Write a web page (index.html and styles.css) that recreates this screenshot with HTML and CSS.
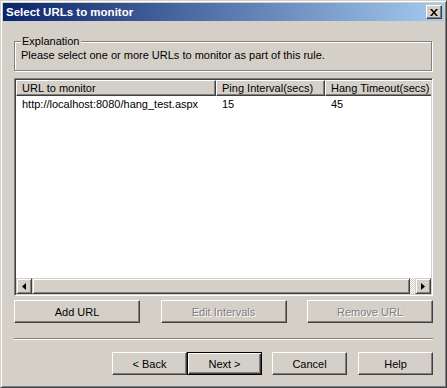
FILE: index.html
```html
<!DOCTYPE html>
<html lang="en">
<head>
    <meta charset="UTF-8">
    <title>Select URLs to monitor</title>
    <link rel="stylesheet" href="styles.css">
</head>
<body>
    <div class="window">
        <div class="titlebar">
            <span class="title">Select URLs to monitor</span>
            <span class="close">
                <svg width="8" height="7" viewBox="0 0 8 7"><path d="M0 0h2l2 2.4 2-2.4h2l-3 3.5 3 3.5h-2l-2-2.4-2 2.4h-2l3-3.5z" fill="#000"/></svg>
            </span>
        </div>

        <div class="content">
            <div class="group">
                <span class="legend">Explanation</span>
                <p>Please select one or more URLs to monitor as part of this rule.</p>
            </div>

            <div class="listview">
                <div class="list-header">
                    <div class="col col-url">URL to monitor</div>
                    <div class="col col-ping">Ping Interval(secs)</div>
                    <div class="col col-hang">Hang Timeout(secs)</div>
                </div>
                <div class="list-rows">
                    <div class="row">
                        <div class="cell col-url">http://localhost:8080/hang_test.aspx</div>
                        <div class="cell col-ping">15</div>
                        <div class="cell col-hang">45</div>
                    </div>
                </div>
                <div class="hscroll">
                    <div class="sb-btn">
                        <svg width="4" height="7" viewBox="0 0 4 7"><path d="M4 0v7L0 3.5z" fill="#000"/></svg>
                    </div>
                    <div class="sb-thumb"></div>
                    <div class="sb-track"></div>
                    <div class="sb-btn">
                        <svg width="4" height="7" viewBox="0 0 4 7"><path d="M0 0v7l4-3.5z" fill="#000"/></svg>
                    </div>
                </div>
            </div>

            <div class="actions">
                <button class="btn wide">Add URL</button>
                <button class="btn wide" disabled>Edit Intervals</button>
                <button class="btn wide" disabled>Remove URL</button>
            </div>

            <div class="separator"></div>

            <div class="nav">
                <button class="btn">&lt; Back</button>
                <button class="btn default">Next &gt;</button>
                <button class="btn cancel">Cancel</button>
                <button class="btn help">Help</button>
            </div>
        </div>
    </div>
</body>
</html>
```

FILE: styles.css
```css
body {
    margin: 0;
    font-family: 'Liberation Sans', Arial, sans-serif;
    font-size: 11px;
    color: #000;
    background: #d4d0c8;
}
.window {
    width: 447px;
    height: 388px;
    box-sizing: border-box;
    background: #d4d0c8;
    border: 1px solid;
    border-color: #d4d0c8 #404040 #404040 #d4d0c8;
    box-shadow: inset 1px 1px #fff, inset -1px -1px #808080;
    padding: 2px;
}
.titlebar {
    height: 18px;
    display: flex;
    align-items: center;
    justify-content: space-between;
    background: linear-gradient(to right, #0a246a, #a6caf0);
    padding: 0 2px 0 3px;
}
.title {
    color: #fff;
    font-weight: bold;
    font-size: 11.5px;
}
.close {
    width: 16px;
    height: 14px;
    box-sizing: border-box;
    display: flex;
    align-items: center;
    justify-content: center;
    background: #d4d0c8;
    border: 1px solid;
    border-color: #fff #404040 #404040 #fff;
    box-shadow: inset -1px -1px #808080;
}
.content {
    padding: 20px 11px 0 11px;
}

/* group box */
.group {
    position: relative;
    height: 30px;
    box-sizing: border-box;
    margin-right: 1px;
    border: 1px solid #808080;
    box-shadow: inset 1px 1px #fff, 1px 1px #fff;
    margin-bottom: 7px;
}
.legend {
    position: absolute;
    top: -7px;
    left: 6px;
    padding: 0 1px;
    line-height: 13px;
    background: #d4d0c8;
}
.group p {
    margin: 0;
    padding: 7px 0 0 6px;
    line-height: 13px;
}

/* list view */
.listview {
    height: 218px;
    box-sizing: border-box;
    background: #fff;
    border: 1px solid;
    border-color: #808080 #fff #fff #808080;
    box-shadow: inset 1px 1px #404040, inset -1px -1px #d4d0c8;
    padding: 1px;
    display: flex;
    flex-direction: column;
    overflow: hidden;
}
.list-header {
    display: flex;
    height: 16px;
    flex-shrink: 0;
    overflow: hidden;
}
.col {
    box-sizing: border-box;
    flex-shrink: 0;
    height: 16px;
    line-height: 14px;
    background: #d4d0c8;
    border: 1px solid;
    border-color: #fff #404040 #404040 #fff;
    box-shadow: inset -1px -1px #808080;
    padding-left: 5px;
    white-space: nowrap;
}
.col-url {
    width: 200px;
}
.col-ping {
    width: 109px;
}
.col-hang {
    width: 109px;
}
.list-rows {
    flex: 1;
}
.row {
    display: flex;
    height: 16px;
    line-height: 16px;
}
.cell {
    box-sizing: border-box;
    flex-shrink: 0;
    padding-left: 6px;
    white-space: nowrap;
}
.hscroll {
    display: flex;
    height: 16px;
    flex-shrink: 0;
}
.sb-btn,
.sb-thumb {
    box-sizing: border-box;
    height: 16px;
    background: #d4d0c8;
    border: 1px solid;
    border-color: #d4d0c8 #404040 #404040 #d4d0c8;
    box-shadow: inset 1px 1px #fff, inset -1px -1px #808080;
}
.sb-btn {
    width: 16px;
    display: flex;
    align-items: center;
    justify-content: center;
}
.sb-thumb {
    width: 378px;
}
.sb-track {
    flex: 1;
    background: repeating-conic-gradient(#fff 0 25%, #d4d0c8 0 50%) 0 0 / 2px 2px;
}

/* buttons */
.btn {
    box-sizing: border-box;
    width: 75px;
    height: 23px;
    padding: 0;
    font-family: inherit;
    font-size: 11px;
    color: #000;
    background: #d4d0c8;
    border: 1px solid;
    border-color: #fff #404040 #404040 #fff;
    box-shadow: inset -1px -1px #808080;
    border-radius: 0;
}
.btn:disabled {
    color: #808080;
    text-shadow: 1px 1px #fff;
}
.btn.default {
    border-color: #000;
    box-shadow: inset 1px 1px #fff, inset -1px -1px #404040, inset -2px -2px #808080;
}
.actions {
    display: flex;
    justify-content: space-between;
    margin-top: 4px;
}
.btn.wide {
    width: 126px;
}
.separator {
    margin-top: 15px;
    border-top: 1px solid #808080;
    border-bottom: 1px solid #fff;
}
.nav {
    display: flex;
    justify-content: flex-end;
    margin-top: 12px;
}
.btn.cancel {
    margin-left: 10px;
}
.btn.help {
    margin-left: 11px;
}
```
